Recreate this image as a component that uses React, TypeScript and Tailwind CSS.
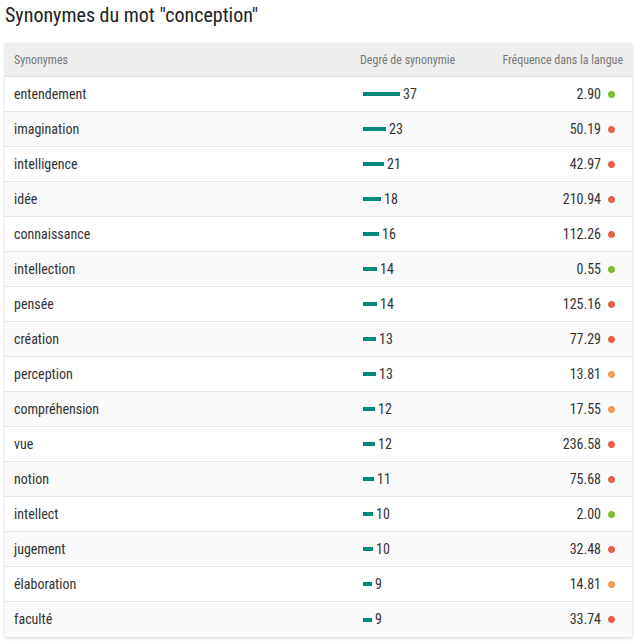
const rows: [string, number, string, "g" | "r" | "o"][] = [
  ["entendement", 37, "2.90", "g"],
  ["imagination", 23, "50.19", "r"],
  ["intelligence", 21, "42.97", "r"],
  ["idée", 18, "210.94", "r"],
  ["connaissance", 16, "112.26", "r"],
  ["intellection", 14, "0.55", "g"],
  ["pensée", 14, "125.16", "r"],
  ["création", 13, "77.29", "r"],
  ["perception", 13, "13.81", "o"],
  ["compréhension", 12, "17.55", "o"],
  ["vue", 12, "236.58", "r"],
  ["notion", 11, "75.68", "r"],
  ["intellect", 10, "2.00", "g"],
  ["jugement", 10, "32.48", "r"],
  ["élaboration", 9, "14.81", "o"],
  ["faculté", 9, "33.74", "r"],
];

const dotClass = {
  g: "bg-[#7cc22a] border-[#6aa823]",
  r: "bg-[#f2604a] border-[#d9503d]",
  o: "bg-[#f9a04c] border-[#e48b3a]",
};

export default function App() {
  return (
    <div className="w-[642px] h-[644px] bg-white font-['Roboto',sans-serif] font-stretch-condensed text-[#333]">
      <h1 className="px-[5px] pt-[2px] text-[20px] leading-[26px] text-[#222]">
        Synonymes du mot "conception"
      </h1>
      <div className="ml-[5px] mt-[15px] w-[627px] shadow-[0_1px_3px_rgba(0,0,0,0.18)]">
        <div className="flex h-[34px] items-center bg-[#eeeeee] border-b border-[#e0e0e0] text-[12px] text-[#777] whitespace-nowrap">
          <div className="flex-1 pl-[9px]">Synonymes</div>
          <div className="w-[140px] pl-[0px]">Degré de synonymie</div>
          <div className="w-[132px] pr-[9px] text-right">Fréquence dans la langue</div>
        </div>
        {rows.map(([word, deg, freq, c], i) => (
          <div
            key={word}
            className={`flex h-[35px] items-center text-[14px] border-b border-[#e3e3e3] last:border-b-0 ${
              i % 2 === 0 ? "bg-white" : "bg-[#fafafa]"
            }`}
          >
            <div className="flex-1 pl-[9px]">{word}</div>
            <div className="w-[140px] flex items-center pl-[3px]">
              <span className="h-[4px] bg-[#00897b]" style={{ width: deg }} />
              <span className="ml-[3px]">{deg}</span>
            </div>
            <div className="w-[132px] flex items-center justify-end pr-[17px]">
              <span>{freq}</span>
              <span className={`ml-[7px] w-[7px] h-[7px] rounded-full border ${dotClass[c]}`} />
            </div>
          </div>
        ))}
      </div>
    </div>
  );
}
